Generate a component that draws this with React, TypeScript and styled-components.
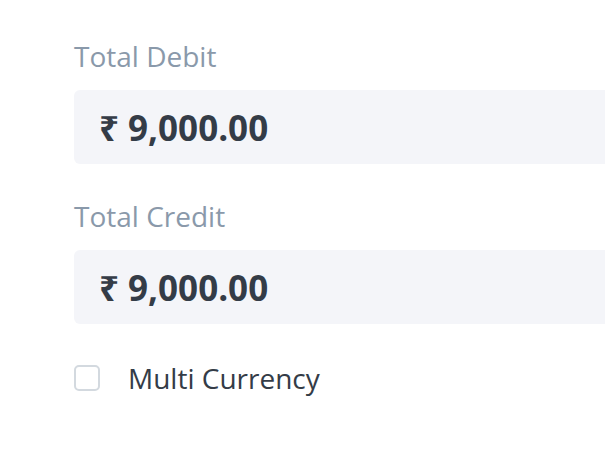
import React from "react";
import styled, { createGlobalStyle } from "styled-components";

const Global = createGlobalStyle`
  html, body { margin: 0; padding: 0; background: #ffffff; }
  body { font-family: "Open Sans", "Noto Sans", sans-serif; }
`;

const Page = styled.div`
  padding: 36px 0 0 74px;
  display: flex;
  flex-direction: column;
`;

const Field = styled.div`
  display: flex;
  flex-direction: column;
  gap: 14px;
  margin-bottom: 32px;
`;

const Label = styled.div`
  font-size: 28px;
  line-height: 40px;
  color: #8a99aa;
`;

const ValueBox = styled.div`
  height: 74px;
  background: #f4f5f9;
  border-radius: 6px 0 0 6px;
  display: flex;
  align-items: center;
  padding-left: 25px;
  font-size: 35px;
  font-weight: 700;
  color: #343c47;
`;

const CheckRow = styled.label`
  display: flex;
  align-items: center;
  gap: 28px;
  margin-top: 3px;
  font-size: 28px;
  color: #343c47;
`;

const Box = styled.span`
  width: 22px;
  height: 22px;
  border: 2px solid #d3d9df;
  border-radius: 5px;
  background: #fff;
`;

const fields = [
  { label: "Total Debit", value: "₹ 9,000.00" },
  { label: "Total Credit", value: "₹ 9,000.00" },
];

export default function App() {
  return (
    <>
      <Global />
      <Page>
        {fields.map((f) => (
          <Field key={f.label}>
            <Label>{f.label}</Label>
            <ValueBox>{f.value}</ValueBox>
          </Field>
        ))}
        <CheckRow>
          <Box />
          Multi Currency
        </CheckRow>
      </Page>
    </>
  );
}
